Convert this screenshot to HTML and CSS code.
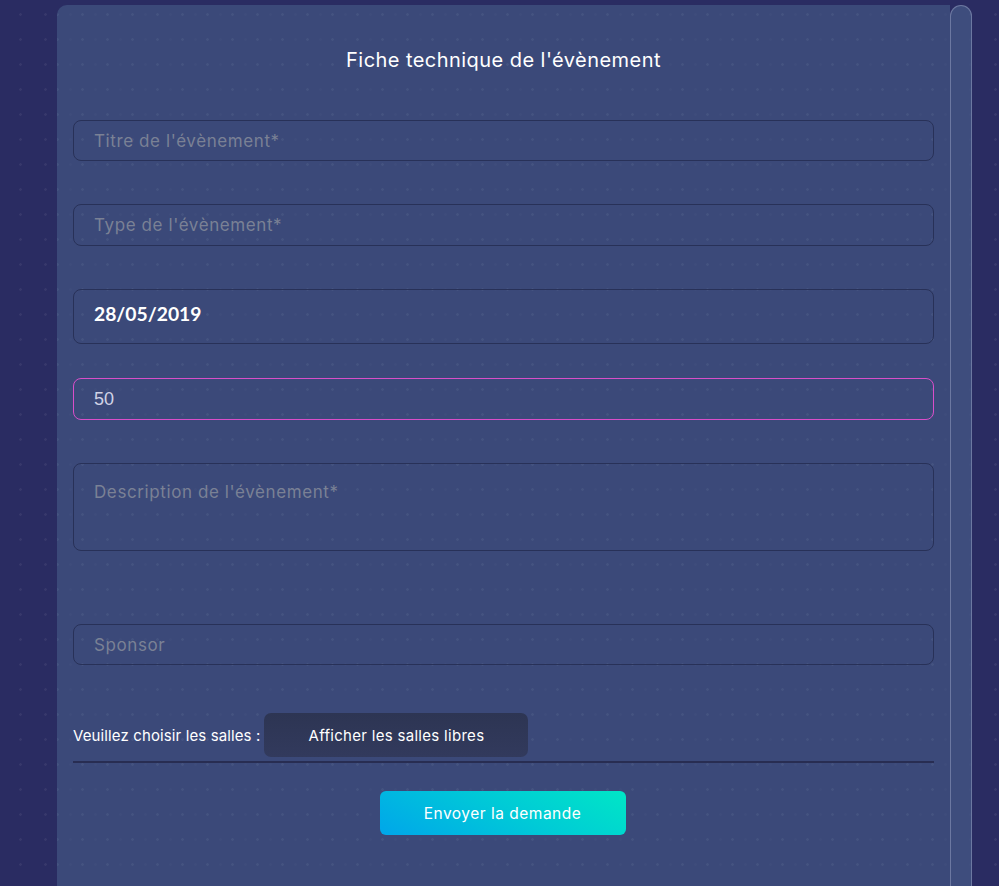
FILE: index.html
```html
<!DOCTYPE html>
<html lang="fr">
<head>
<meta charset="utf-8">
<title>Fiche technique</title>
<link rel="stylesheet" href="styles.css">
</head>
<body>
<div class="panel">
  <form class="card">
    <h1 class="title">Fiche technique de l'évènement</h1>
    <input class="field f-title" type="text" placeholder="Titre de l'évènement*">
    <input class="field f-type" type="text" placeholder="Type de l'évènement*">
    <div class="field f-date">28/05/2019</div>
    <input class="field f-num" type="text" value="50">
    <textarea class="field f-desc" placeholder="Description de l'évènement*"></textarea>
    <input class="field f-sponsor" type="text" placeholder="Sponsor">
    <div class="rooms">
      <span class="rooms-label">Veuillez choisir les salles :</span>
      <button type="button" class="btn-rooms">Afficher les salles libres</button>
    </div>
    <div class="sep"></div>
    <div class="actions">
      <button type="button" class="btn-send">Envoyer la demande</button>
    </div>
  </form>
  <div class="scroll"></div>
</div>
</body>
</html>
```
FILE: styles.css
```css
html, body {
  margin: 0;
  padding: 0;
  height: 100%;
}
body {
  background-color: #2a2c62;
  background-image: radial-gradient(circle, rgba(255,255,255,0.06) 1px, transparent 1.6px);
  background-size: 25px 25px;
  background-position: 8px 2px;
  font-family: "Inter", "Open Sans", sans-serif;
  overflow: hidden;
}
.panel {
  display: flex;
  margin: 5px 0 0 57px;
  width: 915px;
  height: 900px;
}
.card {
  flex: 1;
  display: flex;
  flex-direction: column;
  padding: 41px 16px 0 16px;
  background-color: rgba(64, 82, 128, 0.78);
  background-image: radial-gradient(circle, rgba(255,255,255,0.05) 1px, transparent 1.6px);
  background-size: 25px 25px;
  background-position: -12px -3px;
  border-radius: 10px 0 0 0;
}
.title {
  margin: 0 0 46px 0;
  font-weight: 400;
  font-size: 20px;
  letter-spacing: 0.45px;
  line-height: 28px;
  color: #ffffff;
  text-align: center;
}
.field {
  box-sizing: border-box;
  display: block;
  width: 100%;
  height: 42px;
  margin: 0 0 43px 0;
  padding: 0 20px;
  background: transparent;
  border: 1px solid #283158;
  border-radius: 8px;
  font-family: "Inter", "Open Sans", sans-serif;
  font-size: 17px;
  letter-spacing: 0.6px;
  color: #c8cce0;
  outline: none;
}
.field::placeholder {
  color: #7a8195;
}
.f-title { height: 41px; margin-bottom: 43px; }
.f-date {
  height: 55px;
  margin-bottom: 34px;
  padding-bottom: 7px;
  display: flex;
  align-items: center;
  font-family: "Lato", sans-serif;
  font-weight: 700;
  font-size: 19.3px;
  letter-spacing: 0;
  color: #ffffff;
}
.f-num {
  border-color: #d94ec9;
  font-family: "Liberation Sans", Arial, sans-serif;
  font-size: 18px;
  letter-spacing: 0;
  color: #d0d3e6;
  margin-bottom: 43px;
}
.f-desc {
  height: 88px;
  margin-bottom: 73px;
  padding: 17px 20px;
  resize: none;
  line-height: 22px;
}
.f-sponsor { height: 41px; margin-bottom: 48px; }
.rooms {
  display: flex;
  align-items: center;
  gap: 4px;
  height: 44px;
}
.rooms-label {
  font-size: 15px;
  letter-spacing: 0.12px;
  color: #ffffff;
}
.btn-rooms {
  width: 264px;
  height: 44px;
  border: none;
  border-radius: 7px;
  background: linear-gradient(180deg, #2d3553 0%, #323a5d 100%);
  color: #ffffff;
  font-family: "Inter", "Open Sans", sans-serif;
  font-size: 15px;
  letter-spacing: 0.3px;
}
.sep {
  height: 2px;
  margin-top: 4px;
  background: #282d52;
}
.actions {
  display: flex;
  justify-content: center;
  margin-top: 28px;
}
.btn-send {
  width: 246px;
  height: 44px;
  margin-left: -2px;
  border: none;
  border-radius: 6px;
  background: linear-gradient(30deg, #00a6ea 0%, #00cbd6 55%, #00e6c6 100%);
  color: #ffffff;
  font-family: "Inter", "Open Sans", sans-serif;
  font-size: 15.5px;
  letter-spacing: 0.5px;
}
.scroll {
  width: 20px;
  border: 1px solid rgba(140, 150, 185, 0.6);
  border-radius: 11px 11px 0 0;
  border-bottom: none;
  background: rgba(66, 84, 130, 0.85);
}
```
